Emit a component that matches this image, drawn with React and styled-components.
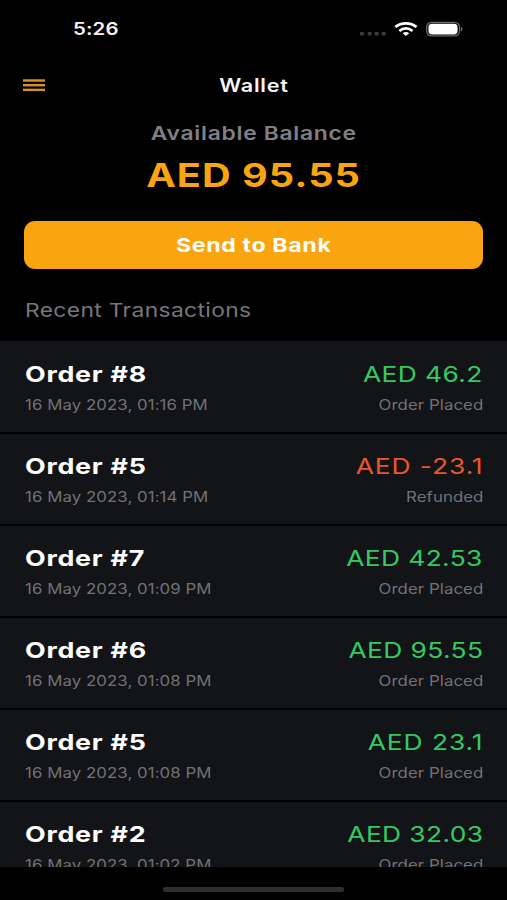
import React from 'react'
import styled, { createGlobalStyle } from 'styled-components'

const GlobalStyle = createGlobalStyle`
    * {
        box-sizing: border-box;
    }
    body {
        margin: 0;
        background: #000;
        font-family: Inter, "Liberation Sans", sans-serif;
    }
`

const Screen = styled.div`
    width: 507px;
    height: 900px;
    display: flex;
    flex-direction: column;
    overflow: hidden;
    background: #000;
`

// the typeface is set wide, so every label is stretched from its own edge
const Text = styled.span`
    display: inline-block;
    white-space: nowrap;
    transform: scaleX(${(p) => p.$wide || 1.2});
    transform-origin: ${(p) => p.$from || 'left'} center;
`

const StatusBar = styled.div`
    height: 58px;
    padding: 0 44px 0 73px;
    display: flex;
    align-items: center;
    justify-content: space-between;
`

const Time = styled(Text)`
    color: #f4f4f4;
    font-size: 17px;
    font-weight: 600;
    letter-spacing: 0.1px;
`

const StatusIcons = styled.div`
    display: flex;
    align-items: center;
`

const Header = styled.header`
    height: 54px;
    padding: 0 23px;
    display: grid;
    grid-template-columns: 22px 1fr 22px;
    align-items: center;
    justify-items: center;
`

const MenuButton = styled.button`
    width: 22px;
    height: 13px;
    padding: 0;
    border: 0;
    background: none;
    display: flex;
`

const Title = styled(Text)`
    color: #f5f5f5;
    font-size: 18px;
    font-weight: 600;
    letter-spacing: 0.6px;
`

const Balance = styled.section`
    padding: 10px 24px 0;
    display: flex;
    flex-direction: column;
    align-items: center;
`

const BalanceLabel = styled(Text)`
    color: #808084;
    font-size: 19px;
    font-weight: 600;
    line-height: 24px;
    letter-spacing: 0.6px;
`

const BalanceAmount = styled(Text)`
    margin-top: 10px;
    color: #faa40f;
    font-size: 32px;
    font-weight: 700;
    line-height: 40px;
    letter-spacing: 0.8px;
`

const SendButton = styled.button`
    width: 100%;
    height: 48px;
    margin-top: 25px;
    padding: 2px 0 0;
    border: 0;
    border-radius: 11px;
    background: #faa40f;
    color: #fff;
    font: 700 19px/46px Inter, "Liberation Sans", sans-serif;
    letter-spacing: 0.5px;
`

const SectionTitle = styled.h2`
    margin: 0;
    padding: 0 25px;
    height: 72px;
    color: #77777b;
    font-size: 19px;
    font-weight: 400;
    line-height: 83px;
    letter-spacing: 0.3px;
`

const List = styled.div`
    height: 526px;
    padding-top: 1px;
    overflow: hidden;
    background: #131417;
`

const Row = styled.div`
    height: 92px;
    padding: 18px 24px 0 25px;
    border-bottom: 2px solid #030304;
    display: flex;
    justify-content: space-between;
`

const Column = styled.div`
    display: flex;
    flex-direction: column;
    align-items: ${(p) => (p.$end ? 'flex-end' : 'flex-start')};
`

const OrderName = styled(Text)`
    color: #fff;
    font-size: 22px;
    font-weight: 700;
    line-height: 28px;
    letter-spacing: 0.6px;
`

// amounts that end in a narrow 1 are spaced a little wider
const Amount = styled(Text)`
    color: ${(p) => (p.$refund ? '#e8572c' : '#35c964')};
    font-size: 22px;
    line-height: 28px;
    letter-spacing: ${(p) => (p.$loose ? '0.75px' : '0.3px')};
`

const Small = styled(Text)`
    margin-top: 5px;
    color: #717276;
    font-size: 14px;
    line-height: 24px;
    letter-spacing: 0.06px;
`

const HomeArea = styled.div`
    height: 33px;
    padding-top: 20px;
    display: flex;
    justify-content: center;
`

const HomeBar = styled.div`
    width: 181px;
    height: 5px;
    border-radius: 3px;
    background: #2f2f2f;
`

const transactions = [
    { order: 'Order #8', date: '16 May 2023, 01:16 PM', amount: 'AED 46.2', status: 'Order Placed' },
    { order: 'Order #5', date: '16 May 2023, 01:14 PM', amount: 'AED -23.1', status: 'Refunded', refund: true },
    { order: 'Order #7', date: '16 May 2023, 01:09 PM', amount: 'AED 42.53', status: 'Order Placed' },
    { order: 'Order #6', date: '16 May 2023, 01:08 PM', amount: 'AED 95.55', status: 'Order Placed' },
    { order: 'Order #5', date: '16 May 2023, 01:08 PM', amount: 'AED 23.1', status: 'Order Placed' },
    { order: 'Order #2', date: '16 May 2023, 01:02 PM', amount: 'AED 32.03', status: 'Order Placed' },
]

const MenuIcon = () => (
    <svg width="22" height="13" viewBox="0 0 22 13" fill="#d8931f">
        <rect y="0.3" width="22" height="2.4" />
        <rect y="5" width="22" height="2.4" />
        <rect y="9.7" width="22" height="2.4" />
    </svg>
)

const SignalIcons = () => (
    <svg width="104" height="20" viewBox="0 0 104 20">
        <g fill="#3c3c3c">
            <rect x="1" y="13" width="4" height="3.4" rx="1" />
            <rect x="8.7" y="13" width="4" height="3.4" rx="1" />
            <rect x="15.7" y="13" width="4" height="3.4" rx="1" />
            <rect x="22.7" y="13" width="4" height="3.4" rx="1" />
        </g>
        <g fill="none" stroke="#fff" strokeWidth="2.7">
            <path d="M36.3 8.1C42.2 3 51.6 3 57.5 8.1" />
            <path d="M40.3 12C44.2 8.6 49.6 8.6 53.5 12" />
        </g>
        <path d="M43.6 14.2C45.5 12.6 48.3 12.6 50.2 14.2L46.9 17.1Z" fill="#fff" />
        <rect x="67.6" y="3.3" width="33" height="13.6" rx="5" fill="none" stroke="#6b6b6b" strokeWidth="1.3" />
        <rect x="69.4" y="4.8" width="29.2" height="10.6" rx="3.6" fill="#fff" />
        <path d="M102 8C104 8.6 104 11.6 102 12.2Z" fill="#6b6b6b" />
    </svg>
)

const App = () => {
    return (
        <Screen>
            <GlobalStyle />
            <StatusBar>
                <Time>5:26</Time>
                <StatusIcons>
                    <SignalIcons />
                </StatusIcons>
            </StatusBar>
            <Header>
                <MenuButton aria-label="Menu">
                    <MenuIcon />
                </MenuButton>
                <Title $from="center">Wallet</Title>
            </Header>
            <Balance>
                <BalanceLabel $from="center">Available Balance</BalanceLabel>
                <BalanceAmount $from="center" $wide={1.24}>AED 95.55</BalanceAmount>
                <SendButton>
                    <Text $from="center" $wide={1.22}>Send to Bank</Text>
                </SendButton>
            </Balance>
            <SectionTitle>
                <Text>Recent Transactions</Text>
            </SectionTitle>
            <List>
                {transactions.map((t, i) => (
                    <Row key={i}>
                        <Column>
                            <OrderName $wide={1.22}>{t.order}</OrderName>
                            <Small>{t.date}</Small>
                        </Column>
                        <Column $end>
                            <Amount $from="right" $refund={t.refund} $loose={t.amount.endsWith('1')}>
                                {t.amount}
                            </Amount>
                            <Small $from="right">{t.status}</Small>
                        </Column>
                    </Row>
                ))}
            </List>
            <HomeArea>
                <HomeBar />
            </HomeArea>
        </Screen>
    )
}

export default App
